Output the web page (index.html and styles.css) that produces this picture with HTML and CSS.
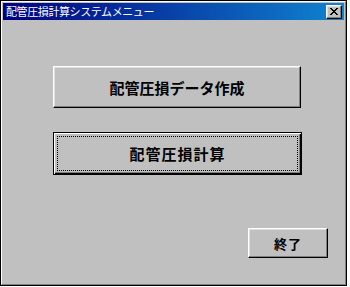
FILE: index.html
```html
<!DOCTYPE html>
<html lang="ja">
<head>
<meta charset="utf-8">
<link rel="stylesheet" href="styles.css">
</head>
<body>
<div class="window">
  <div class="frame">
    <div class="titlebar">
      <span class="title">配管圧損計算システムメニュー</span>
      <span class="close">
        <svg width="8" height="7" viewBox="0 0 8 7"><path d="M0 0h2v1h1v1h2V1h1V0h2v1H7v1H6v1H5v1h1v1h1v1h1v1H6V6H5V5H3v1H2v1H0V6h1V5h1V4h1V3H2V2H1V1H0z" fill="#000"/></svg>
      </span>
    </div>
    <div class="client">
      <button class="btn big">配管圧損データ作成</button>
      <button class="btn big default"><span class="focus">配管圧損計算</span></button>
      <button class="btn small">終了</button>
    </div>
  </div>
</div>
</body>
</html>
```
FILE: styles.css
```css
html, body {
  margin: 0;
  padding: 0;
  background: #ffffff;
}
.window {
  width: 347px;
  height: 286px;
  box-sizing: border-box;
  border: 1px solid #000;
  background: #c0c0c0;
}
.frame {
  height: 100%;
  box-sizing: border-box;
  border-top: 1px solid #fff;
  border-left: 1px solid #fff;
  border-right: 1px solid #808080;
  border-bottom: 1px solid #808080;
  padding: 1px;
  display: flex;
  flex-direction: column;
}
.titlebar {
  height: 17px;
  flex: none;
  display: flex;
  align-items: center;
  justify-content: space-between;
  padding: 0 2px 0 3px;
  background: linear-gradient(to right, #000080, #1084d0);
  color: #fff;
  font-family: "Noto Sans CJK JP", sans-serif;
  font-size: 11px;
  line-height: 17px;
}
.title {
  letter-spacing: -0.4px;
}
.close {
  width: 16px;
  height: 14px;
  box-sizing: border-box;
  background: #c0c0c0;
  border: 1px solid;
  border-color: #fff #000 #000 #fff;
  box-shadow: inset -1px -1px #808080, inset 1px 1px #dfdfdf;
  display: flex;
  align-items: center;
  justify-content: center;
}
.client {
  flex: 1;
  display: flex;
  flex-direction: column;
  align-items: flex-start;
  padding-left: 50px;
}
.btn {
  box-sizing: border-box;
  background: #c0c0c0;
  border: 1px solid;
  border-color: #fff #000 #000 #fff;
  box-shadow: inset -1px -1px #808080, inset 1px 1px #dfdfdf;
  font-family: "Noto Sans CJK JP", sans-serif;
  font-weight: bold;
  color: #000;
  padding: 0;
  margin: 0;
  display: flex;
  align-items: center;
  justify-content: center;
}
.big {
  width: 248px;
  height: 42px;
  font-size: 15px;
  margin-top: 46px;
}
.default {
  width: 249px;
  height: 43px;
  margin-top: 24px;
  border: 1px solid #000;
  box-shadow: inset 1px 1px #fff, inset -1px -1px #000, inset -2px -2px #808080;
  padding: 3px;
  letter-spacing: 1px;
}
.focus {
  flex: 1;
  align-self: stretch;
  display: flex;
  align-items: center;
  justify-content: center;
  border: 1px dotted #000;
}
.small {
  width: 80px;
  height: 30px;
  font-size: 13px;
  letter-spacing: 1px;
  margin-top: 53px;
  margin-left: 195px;
}
```
